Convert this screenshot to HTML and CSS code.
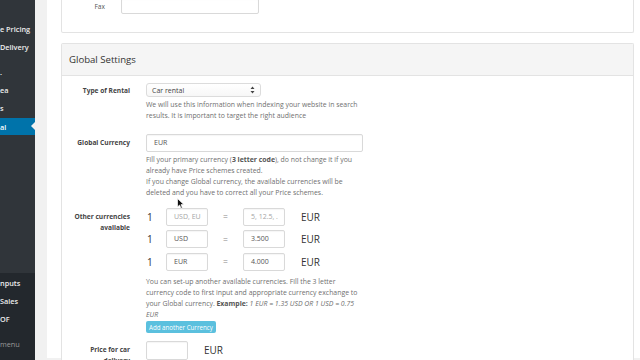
FILE: index.html
```html
<html>
    <head>
        <link rel="stylesheet" href="styles.css">
    </head>
    <body>
        <div class="layout">
            <aside class="sidebar">
                <ul class="menu">
                    <li class="item">e Pricing</li>
                    <li class="item item-gap">Delivery</li>
                    <li class="item">.</li>
                    <li class="item">ea</li>
                    <li class="item">s</li>
                    <li class="item active">al</li>
                </ul>
                <ul class="menu menu-bottom">
                    <li class="item">nputs</li>
                    <li class="item">Sales</li>
                    <li class="item item-gap">OF</li>
                    <li class="item muted">menu</li>
                </ul>
            </aside>
            <main class="content">
                <div class="page">
                    <section class="panel panel-top">
                        <div class="row row-fax">
                            <label class="label">Fax</label>
                            <div class="input input-fax"></div>
                        </div>
                    </section>

                    <section class="panel panel-global">
                        <div class="panel-heading">Global Settings</div>
                        <div class="panel-body">
                            <div class="row row-rental">
                                <label class="label label-select">Type of Rental</label>
                                <div class="control">
                                    <div class="select">
                                        <span>Car rental</span>
                                        <svg class="caret" width="5" height="8" viewBox="0 0 5 8"><path d="M2.5 0.5 L4.5 3 H0.5 Z M2.5 7.5 L4.5 5 H0.5 Z" fill="#444"/></svg>
                                    </div>
                                    <p class="help">We will use this information when indexing your website in search results. It is important to target the right audience</p>
                                </div>
                            </div>

                            <div class="row row-currency">
                                <label class="label label-input">Global Currency</label>
                                <div class="control">
                                    <div class="input input-wide">EUR</div>
                                    <p class="help">Fill your primary currency (<b>3 letter code</b>), do not change it if you already have Price schemes created.<br>If you change Global currency, the available currencies will be deleted and you have to correct all your Price schemes.</p>
                                </div>
                            </div>

                            <div class="row row-others">
                                <label class="label label-pair">Other currencies available</label>
                                <div class="control">
                                    <div class="pair">
                                        <span class="one">1</span>
                                        <div class="input input-small placeholder">USD, EU</div>
                                        <span class="equals">=</span>
                                        <div class="input input-small placeholder">5, 12.5, .</div>
                                        <span class="unit">EUR</span>
                                    </div>
                                    <div class="pair">
                                        <span class="one">1</span>
                                        <div class="input input-small">USD</div>
                                        <span class="equals">=</span>
                                        <div class="input input-small">3.500</div>
                                        <span class="unit">EUR</span>
                                    </div>
                                    <div class="pair">
                                        <span class="one">1</span>
                                        <div class="input input-small">EUR</div>
                                        <span class="equals">=</span>
                                        <div class="input input-small">4.000</div>
                                        <span class="unit">EUR</span>
                                    </div>
                                    <p class="help help-pairs">You can set-up another available currencies. Fill the 3 letter currency code to first input and appropriate currency exchange to your Global currency. <b>Example:</b> <i>1 EUR = 1.35 USD OR 1 USD = 0.75 EUR</i></p>
                                    <button class="btn-add" type="button">Add another Currency</button>
                                </div>
                            </div>

                            <div class="row row-delivery">
                                <label class="label label-pair">Price for car delivery</label>
                                <div class="control">
                                    <div class="pair">
                                        <div class="input input-price"></div>
                                        <span class="unit">EUR</span>
                                    </div>
                                </div>
                            </div>
                        </div>
                    </section>
                </div>
                <svg class="cursor" width="8" height="11" viewBox="0 0 8 11"><path d="M0.5 0.5 V9 L2.6 7 L4 10.3 L5.3 9.7 L4 6.6 H6.8 Z" fill="#111" stroke="#fff" stroke-width="0.7"/></svg>
            </main>
        </div>
    </body>
</html>
```

FILE: styles.css
```css
* {
    margin: 0;
    padding: 0;
    box-sizing: border-box;
}

html,body {
    height: 100%;
    overflow: hidden;
}

body {
    font-family: "Open Sans", "Liberation Sans", sans-serif;
    color: #333;
    background: #fff;
}

.layout {
    display: flex;
    height: 360px;
}

/* admin sidebar, cut off at the left edge */

.sidebar {
    width: 35px;
    display: flex;
    flex-direction: column;
    background: #30353a;
    overflow: hidden;
}

.menu {
    list-style: none;
    padding-top: 20px;
    height: 273px;
}

.menu-bottom {
    flex: 1;
    padding-top: 1px;
    background: #23282d;
}

.item {
    height: 18px;
    line-height: 18px;
    font-size: 7.3px;
    font-weight: 600;
    color: #eee;
    white-space: nowrap;
}

.item-gap {
    margin-bottom: 7px;
}

.item.active {
    position: relative;
    margin-top: 1px;
    height: 17px;
    background: #0073aa;
    color: #fff;
}

.item.active::after {
    content: "";
    position: absolute;
    right: 0;
    top: 4px;
    border-top: 4px solid transparent;
    border-bottom: 4px solid transparent;
    border-right: 4px solid #f1f1f1;
}

.muted {
    color: #999;
    font-weight: 400;
}

/* content */

.content {
    flex: 1;
    position: relative;
    background: #f1f1f1;
}

.page {
    margin-left: 12px;
    height: 100%;
    background: #fff;
    padding: 0 6px 0 14px;
}

.panel {
    border: 1px solid #e3e3e3;
    border-radius: 2px;
    background: #fff;
}

.panel-top {
    margin-top: -2px;
    height: 35px;
    border-top: none;
}

.panel-global {
    margin-top: 10px;
    border-bottom: none;
}

.panel-heading {
    height: 32px;
    line-height: 31px;
    padding-left: 7px;
    font-size: 9.6px;
    color: #333;
    background: #f5f5f5;
    border-bottom: 1px solid #e3e3e3;
}

.row {
    display: grid;
    grid-template-columns: 68px 1fr;
    column-gap: 16px;
    align-items: start;
}

.row-fax {
    grid-template-columns: 43px 1fr;
    padding-top: 2px;
}

.label {
    text-align: right;
    font-size: 6.6px;
    font-weight: 700;
    line-height: 11px;
    color: #444;
}

.row-fax .label {
    font-weight: 400;
    color: #555;
    padding-top: 1px;
}

.label-select {
    padding-top: 1.5px;
}

.label-input {
    padding-top: 3.5px;
}

.label-pair {
    padding-top: 3px;
}

.control {
    display: flex;
    flex-direction: column;
    align-items: flex-start;
}

.input {
    height: 18px;
    line-height: 16px;
    padding-left: 7px;
    font-size: 7px;
    color: #555;
    background: #fff;
    border: 1px solid #d9d9d9;
    border-radius: 2px;
    box-shadow: inset 0 1px 1px rgba(0, 0, 0, 0.04);
}

.input-fax {
    width: 138px;
    height: 16px;
    margin-top: -2px;
}

.input-wide {
    width: 217px;
}

.input-small {
    width: 42px;
    height: 18px;
    white-space: nowrap;
    overflow: hidden;
}

.input-price {
    width: 42px;
    height: 19px;
}

.placeholder {
    color: #a5a5a5;
}

.select {
    width: 115px;
    height: 14px;
    padding: 0 5px 0 5px;
    display: flex;
    justify-content: space-between;
    align-items: center;
    font-size: 7px;
    color: #444;
    background: linear-gradient(#fff, #f7f7f7);
    border: 1px solid #dcdcdc;
    border-radius: 3px;
}

.help {
    margin-top: 1.5px;
    width: 218px;
    font-size: 6.9px;
    line-height: 11.5px;
    color: #6f6f6f;
}

.row-currency .help {
    line-height: 11px;
    margin-top: 2px;
}

.help b {
    font-weight: 700;
    color: #555;
}

.row-rental {
    padding-top: 7px;
}

.row-currency {
    margin-top: 12px;
}

.row-others {
    margin-top: 10px;
}

.pair {
    display: flex;
    align-items: center;
    height: 18px;
    margin-bottom: 4.5px;
}

.one {
    width: 20px;
    padding-left: 1px;
    font-size: 10px;
    color: #333;
}

.equals {
    width: 35px;
    text-align: center;
    font-size: 8.5px;
    color: #888;
}

.unit {
    padding-left: 16px;
    font-size: 10px;
    color: #333;
}

.help-pairs {
    margin-top: 1px;
    line-height: 11px;
}

.btn-add {
    margin-top: 1px;
    height: 12px;
    padding: 0 3px;
    font-family: "Open Sans", "Liberation Sans", sans-serif;
    font-size: 6.2px;
    color: #fff;
    background: #5bc0de;
    border: none;
    border-radius: 2px;
}

.row-delivery {
    margin-top: 8px;
}

.row-delivery .unit {
    padding-left: 16px;
}

.cursor {
    position: absolute;
    left: 142px;
    top: 198px;
}
```
